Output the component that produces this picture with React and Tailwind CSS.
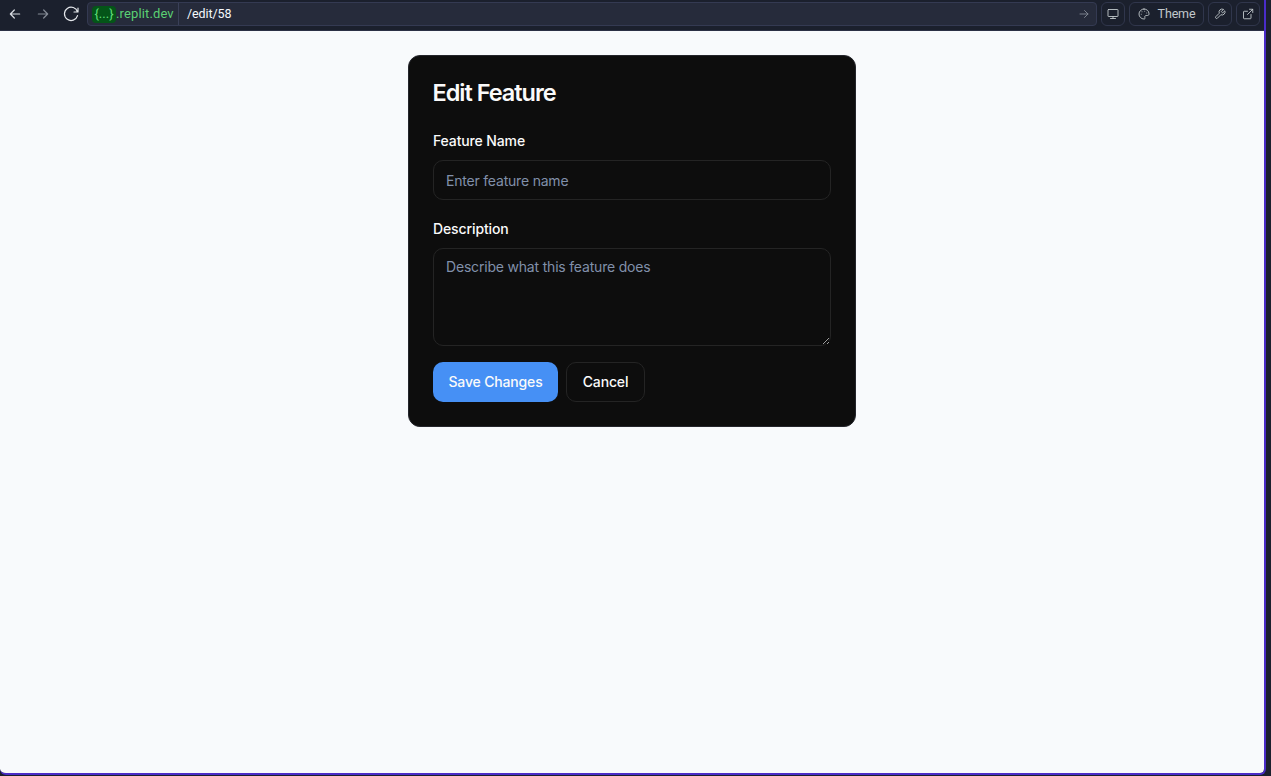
import React from 'react';

function Icon({ size = 12, className = '', children }) {
  return (
    <svg width={size} height={size} viewBox="0 0 24 24" fill="none" stroke="currentColor" strokeWidth="1.8" strokeLinecap="round" strokeLinejoin="round" className={`shrink-0 ${className}`}>
      {children}
    </svg>
  );
}

function ToolButton({ className = '', children }) {
  return (
    <button className={`flex h-6 shrink-0 items-center justify-center rounded-[6px] border border-[#30364c] text-[#c2c8cc] ${className}`}>
      {children}
    </button>
  );
}

function Toolbar() {
  return (
    <header className="flex h-[31px] shrink-0 items-start border-b border-[#2b3045] bg-[#1b202d] pt-0.5 font-['Roboto',sans-serif] text-[12.5px] leading-4">
      <div className="flex h-6 w-[87px] shrink-0 items-center pl-[7px]">
        <Icon size={16} className="text-[#d8dce2]">
          <path d="M19 12H5M11 6l-6 6 6 6" />
        </Icon>
        <Icon size={16} className="ml-3 text-[#858b96]">
          <path d="M5 12h14M13 6l6 6-6 6" />
        </Icon>
        <Icon size={16} className="ml-3 text-[#e4e7eb]">
          <path d="M22.5 3v6h-6M21.8 9A10 10 0 1 0 21.8 14.5" />
        </Icon>
      </div>
      <div className="flex h-6 w-[1010px] shrink-0 items-center rounded-[4px] border border-[#343a52] bg-[#262b3b]">
        <div className="flex h-full w-[91px] shrink-0 items-center border-r border-[#3a4058] pl-1">
          <span className="flex h-[17px] w-6 shrink-0 items-center justify-center rounded-[4px] bg-[#045518] text-[13px] text-[#5fdc78]">{'{...}'}</span>
          <span className="text-[13px] tracking-[0.13px] text-[#5ad073]">.replit.dev</span>
        </div>
        <span className="pl-2 tracking-[-0.1px] text-[#f5f9fc]">/edit/58</span>
        <Icon size={12} className="mr-1.5 ml-auto text-[#858b96]">
          <path d="M4 12h16M13 5l7 7-7 7" />
        </Icon>
      </div>
      <ToolButton className="ml-1 w-6">
        <Icon>
          <path d="M3 3h18a1 1 0 0 1 1 1v12a1 1 0 0 1-1 1H3a1 1 0 0 1-1-1V4a1 1 0 0 1 1-1zM12 17v4M7 21h10" />
        </Icon>
      </ToolButton>
      <ToolButton className="ml-1 w-[75px] gap-2">
        <Icon>
          <path d="M12 2a10 10 0 1 0 0 20c2 0 2.5-1.4 1.8-2.8-.9-1.9.3-4.2 2.5-4.2H19c2 0 3-1.3 3-3.5C22 6 17.5 2 12 2z" />
          <path d="M8 7.5h.01M13.5 6.5h.01M17.5 10h.01M6.5 12.5h.01" />
        </Icon>
        <span className="tracking-[-0.15px]">Theme</span>
      </ToolButton>
      <ToolButton className="ml-1 w-6">
        <Icon>
          <path d="M15 6.3a1 1 0 0 0 0 1.4l1.5 1.6a1 1 0 0 0 1.4 0l3.7-3.7a6 6 0 0 1-7.9 7.9l-7 7a2.2 2.2 0 0 1-3.1-3.1l7-7a6 6 0 0 1 7.9-7.9z" />
        </Icon>
      </ToolButton>
      <ToolButton className="ml-1 w-6">
        <Icon>
          <path d="M15 2.5h6.5V9M21.5 2.5 11 13M18 13v7a1.5 1.5 0 0 1-1.5 1.5h-12A1.5 1.5 0 0 1 3 20V8a1.5 1.5 0 0 1 1.5-1.5H11" />
        </Icon>
      </ToolButton>
    </header>
  );
}

function FeatureForm() {
  return (
    <form className="flex h-[372px] w-[448px] flex-col rounded-xl border border-[#24252b] bg-[#0d0d0d] p-6 text-[#fafafa]">
      <h1 className="-mt-px -ml-[0.5px] text-[23.5px] leading-7 font-semibold tracking-[-1.02px]">Edit Feature</h1>
      <label htmlFor="name" className="mt-[26px] text-[14px] leading-4 font-medium tracking-[-0.13px]">Feature Name</label>
      <input id="name" placeholder="Enter feature name" className="mt-[11px] block h-10 w-[398px] shrink-0 rounded-[10px] border border-[#242424] bg-transparent px-3 text-[14px] tracking-[-0.2px] outline-none placeholder:text-[#8190aa]" />
      <label htmlFor="description" className="mt-[21px] text-[14px] leading-4 font-medium tracking-[-0.11px]">Description</label>
      <textarea id="description" placeholder="Describe what this feature does" className="mt-[11px] block h-[98px] w-[398px] shrink-0 resize-y rounded-[10px] border border-[#242424] bg-transparent px-3 py-2 text-[14px] leading-5 tracking-[-0.19px] outline-none placeholder:text-[#8190aa]" />
      <div className="mt-4 flex gap-2 text-[14px] leading-5 font-medium tracking-[-0.16px]">
        <button type="button" className="h-10 w-[125px] rounded-[10px] bg-[#4690f5]">Save Changes</button>
        <button type="button" className="h-10 w-[79px] rounded-[10px] border border-[#242424]">Cancel</button>
      </div>
    </form>
  );
}

export default function App() {
  return (
    <div className="h-[776px] w-[1271px] overflow-hidden bg-[#1b202d] pr-[5px] pb-px font-['Inter',sans-serif]">
      <div className="flex h-[775px] flex-col overflow-hidden rounded-b-[6px] border-r-2 border-b-2 border-[#4a2cc8]">
        <Toolbar />
        <main className="flex flex-1 items-start justify-center rounded-b-[4px] bg-[#f8fafc] pt-6">
          <FeatureForm />
        </main>
      </div>
    </div>
  );
}
